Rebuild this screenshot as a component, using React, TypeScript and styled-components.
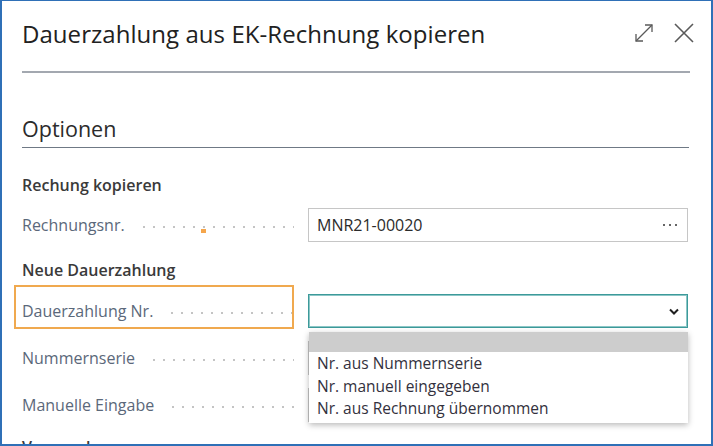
import React from "react";
import styled, { createGlobalStyle } from "styled-components";

const Global = createGlobalStyle`
  html, body { margin: 0; padding: 0; background: #fff; }
  body { font-family: "Open Sans", "Noto Sans", sans-serif; }
  * { box-sizing: border-box; }
`;

const Dialog = styled.div`
  width: 713px;
  height: 446px;
  overflow: hidden;
  background: #fff;
  border: 2px solid #2f70b7;
  border-top-width: 1px;
  display: flex;
  flex-direction: column;
`;

const Header = styled.header`
  height: 70px;
  flex: none;
  display: flex;
  align-items: center;
  justify-content: space-between;
  padding: 0 16px 6px 20px;
`;

const Title = styled.h1`
  margin: 0;
  font-size: 24px;
  font-weight: 400;
  color: #212121;
  letter-spacing: 0.05px;
`;

const HeaderActions = styled.div`
  display: flex;
  align-items: center;
  gap: 18px;
`;

const IconButton = styled.button`
  border: 0;
  background: none;
  padding: 0;
  width: 22px;
  height: 22px;
  color: #5a5a5a;
  display: flex;
  align-items: center;
  justify-content: center;
`;

const HeaderRule = styled.div`
  flex: none;
  height: 2px;
  margin: 0 21px 0 20px;
  background: #a3a8b0;
`;

const Content = styled.div`
  padding: 0 22px 0 20px;
`;

const SectionTitle = styled.h2`
  margin: 42px 0 0;
  padding-bottom: 4px;
  font-size: 21.5px;
  line-height: 28px;
  font-weight: 400;
  color: #2b2b2b;
  border-bottom: 1px solid #6f7985;
`;

const GroupTitle = styled.h3<{ $top: number }>`
  margin: ${(p) => p.$top}px 0 0;
  font-size: 16px;
  line-height: 20px;
  font-weight: 600;
  color: #3a3a3a;
`;

const FieldRow = styled.div<{ $top: number }>`
  margin-top: ${(p) => p.$top}px;
  display: grid;
  grid-template-columns: 272px 380px;
  column-gap: 14px;
  height: 34px;
`;

const LabelCell = styled.div<{ $focus?: boolean }>`
  position: relative;
  display: flex;
  align-items: center;
  &::after {
    content: "";
    display: ${(p) => (p.$focus ? "block" : "none")};
    position: absolute;
    top: -9px;
    left: -8px;
    right: 0;
    bottom: -1px;
    border: 2px solid #f0a94f;
  }
`;

const LabelText = styled.span`
  font-size: 16px;
  color: #5b687a;
  white-space: nowrap;
`;

const Leader = styled.span`
  position: relative;
  flex: 1;
  height: 4px;
  margin-left: 14px;
  margin-top: 3px;
  background-image: radial-gradient(circle, #c4c4c4 1px, transparent 1.3px);
  background-size: 10px 4px;
  background-repeat: repeat-x;
`;

const Caret = styled.span`
  position: absolute;
  left: 62px;
  top: 4px;
  width: 5px;
  height: 4px;
  background: #f5a64c;
`;

const InputBox = styled.div`
  position: relative;
  display: flex;
  align-items: center;
  justify-content: space-between;
  height: 34px;
  padding: 0 9px 0 8px;
  border: 1px solid #c6c6c6;
  font-size: 16px;
  color: #2b2b2b;
  background: #fff;
`;

const SelectBox = styled(InputBox)`
  border: 1px solid #3d9a9a;
  box-shadow: inset 0 0 0 1px #8cc6c6;
  padding-right: 8px;
`;

const SelectSpacer = styled.span``;

const List = styled.ul`
  position: absolute;
  z-index: 5;
  top: 37px;
  left: 0;
  width: 379px;
  margin: 0;
  padding: 0 0 3px;
  list-style: none;
  background: #fff;
  box-shadow: 0 2px 6px rgba(0, 0, 0, 0.28);
`;

const ListItem = styled.li<{ $empty?: boolean }>`
  height: ${(p) => (p.$empty ? "20px" : "22.5px")};
  line-height: 22.5px;
  padding-left: 8px;
  font-size: 15.5px;
  color: #33313d;
  background: ${(p) => (p.$empty ? "#cdcdcd" : "#fff")};
  white-space: nowrap;
`;

const ExpandIcon = () => (
  <svg width="22" height="22" viewBox="0 0 22 22" fill="none" stroke="currentColor" strokeWidth="1.3">
    <path d="M3 19 L19 3" />
    <path d="M12 3 H19 V10" />
    <path d="M3 12 V19 H10" />
  </svg>
);

const CloseIcon = () => (
  <svg width="22" height="22" viewBox="0 0 22 22" fill="none" stroke="currentColor" strokeWidth="1.6">
    <path d="M2 2 L20 20 M20 2 L2 20" />
  </svg>
);

const Ellipsis = () => (
  <svg width="16" height="4" viewBox="0 0 16 4" fill="#666">
    <rect x="1" y="1" width="2" height="2" />
    <rect x="7" y="1" width="2" height="2" />
    <rect x="13" y="1" width="2" height="2" />
  </svg>
);

const Chevron = () => (
  <svg width="10" height="7" viewBox="0 0 10 7" fill="none" stroke="#1f1f1f" strokeWidth="2">
    <path d="M1 1.5 L5 5.5 L9 1.5" />
  </svg>
);

const options = ["Nr. aus Nummernserie", "Nr. manuell eingegeben", "Nr. aus Rechnung übernommen"];

export default function App() {
  return (
    <>
      <Global />
      <Dialog>
        <Header>
          <Title>Dauerzahlung aus EK-Rechnung kopieren</Title>
          <HeaderActions>
            <IconButton aria-label="Maximieren">
              <ExpandIcon />
            </IconButton>
            <IconButton aria-label="Schließen">
              <CloseIcon />
            </IconButton>
          </HeaderActions>
        </Header>
        <HeaderRule />
        <Content>
          <SectionTitle>Optionen</SectionTitle>
          <GroupTitle $top={27}>Rechung kopieren</GroupTitle>
          <FieldRow $top={13}>
            <LabelCell>
              <LabelText>Rechnungsnr.</LabelText>
              <Leader>
                <Caret />
              </Leader>
            </LabelCell>
            <InputBox>
              <span>MNR21-00020</span>
              <Ellipsis />
            </InputBox>
          </FieldRow>
          <GroupTitle $top={18}>Neue Dauerzahlung</GroupTitle>
          <FieldRow $top={14}>
            <LabelCell $focus>
              <LabelText>Dauerzahlung Nr.</LabelText>
              <Leader />
            </LabelCell>
            <SelectBox>
              <SelectSpacer />
              <Chevron />
              <List>
                <ListItem $empty />
                {options.map((o) => (
                  <ListItem key={o}>{o}</ListItem>
                ))}
              </List>
            </SelectBox>
          </FieldRow>
          <FieldRow $top={13}>
            <LabelCell>
              <LabelText>Nummernserie</LabelText>
              <Leader />
            </LabelCell>
            <InputBox />
          </FieldRow>
          <FieldRow $top={13}>
            <LabelCell>
              <LabelText>Manuelle Eingabe</LabelText>
              <Leader />
            </LabelCell>
            <InputBox />
          </FieldRow>
          <GroupTitle $top={15}>Verwendung</GroupTitle>
        </Content>
      </Dialog>
    </>
  );
}
